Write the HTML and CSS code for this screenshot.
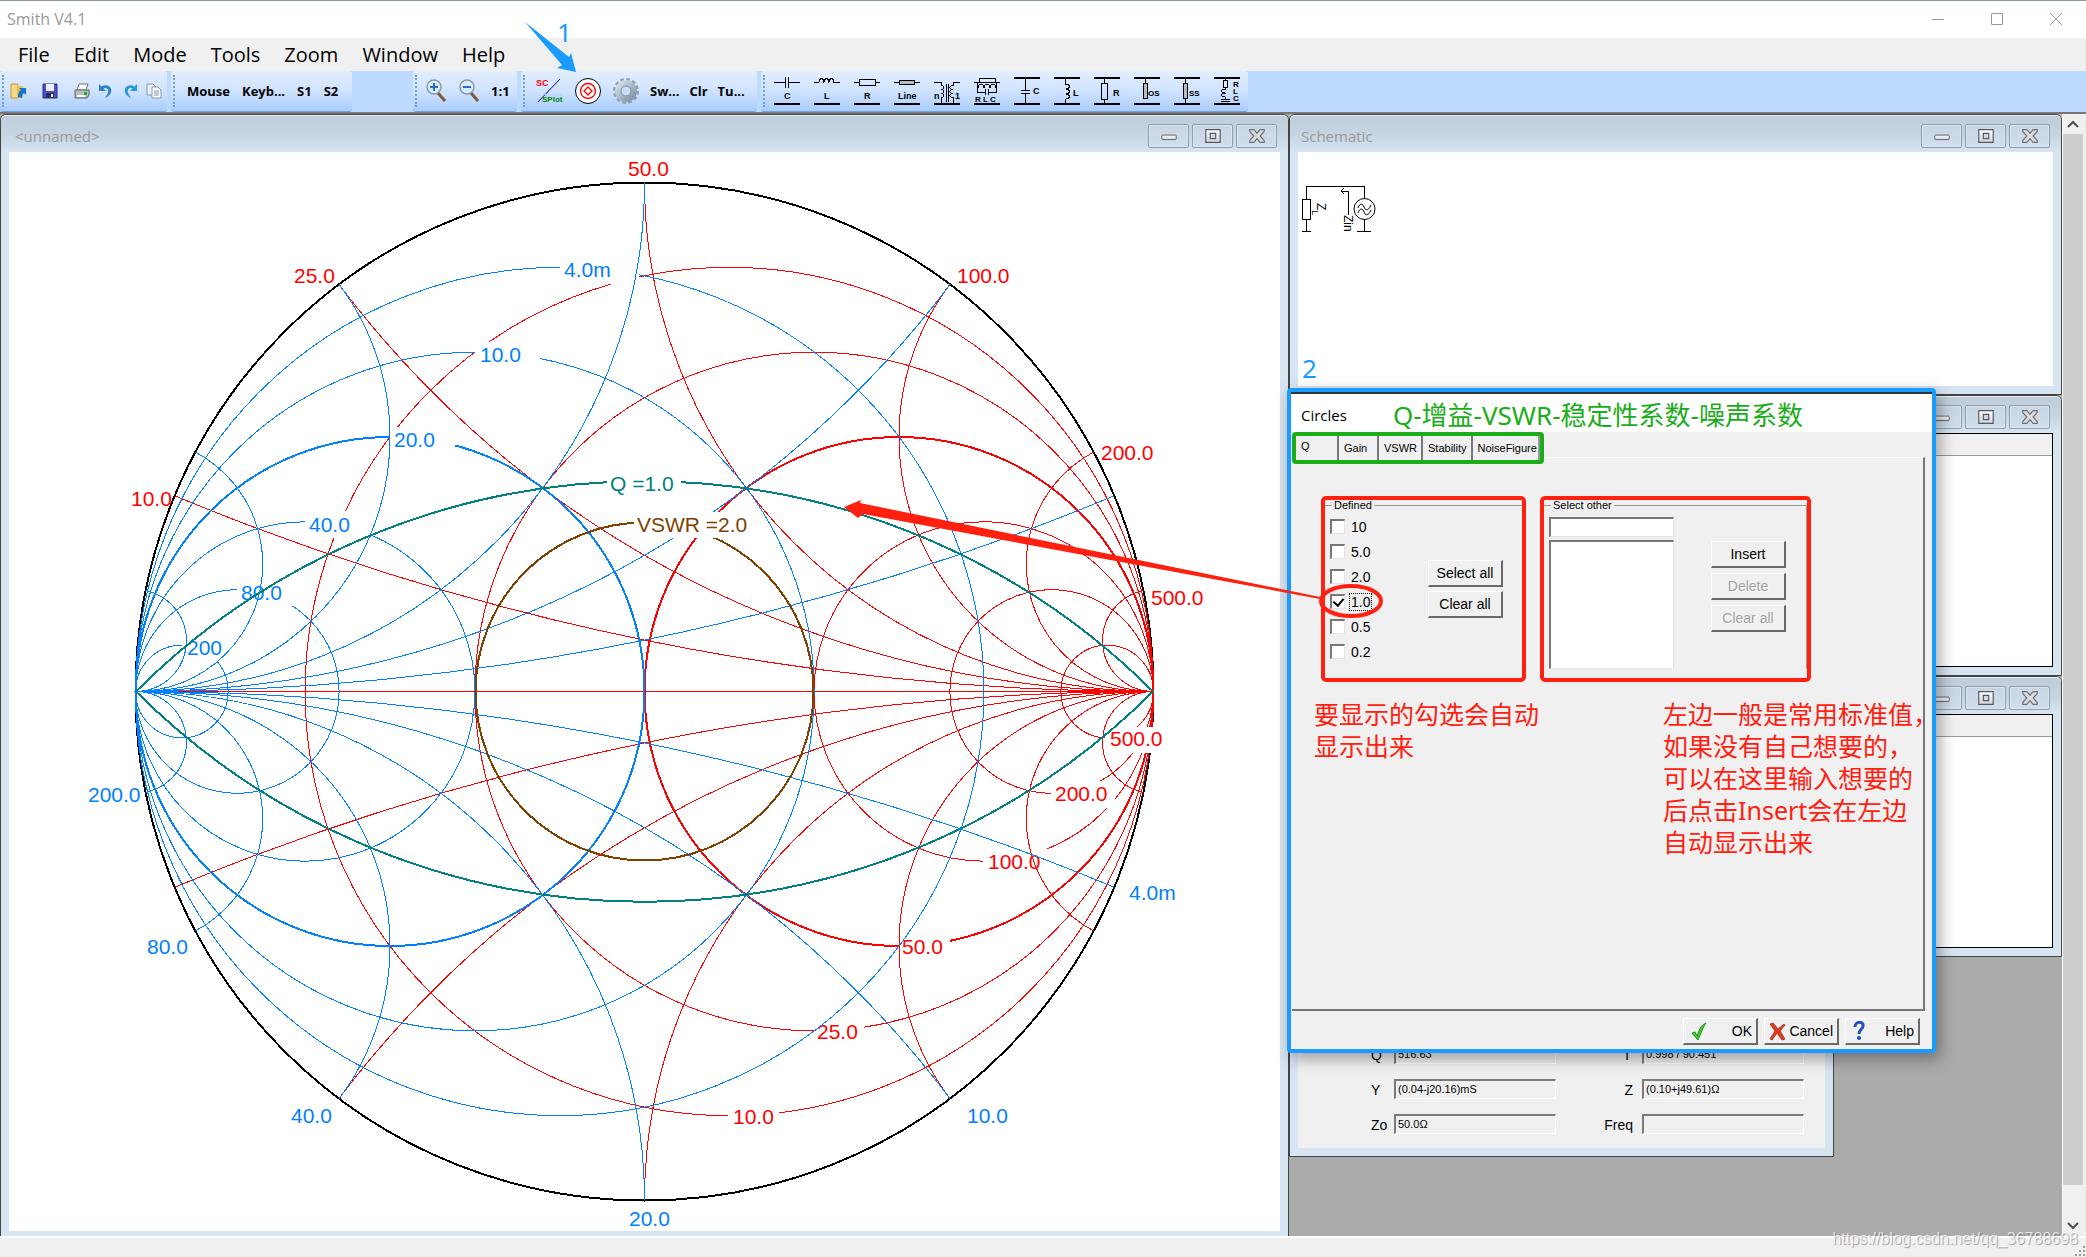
FILE: index.html
```html
<!DOCTYPE html>
<html lang="en">
<head>
    <meta charset="UTF-8">
    <meta name="viewport" content="width=device-width, initial-scale=1.0">
    <title>Smith V4.1</title>
    <link rel="stylesheet" href="styles.css">
</head>
<body>
    <svg class="defs" width="0" height="0" aria-hidden="true">
        <defs>
            <linearGradient id="metal" x1="0" y1="0" x2="0" y2="1">
                <stop offset="0" stop-color="#fff"/>
                <stop offset="1" stop-color="#d4d4d8"/>
            </linearGradient>
            <linearGradient id="gear" x1="0" y1="0" x2="1" y2="1">
                <stop offset="0" stop-color="#d3dfe8"/>
                <stop offset="1" stop-color="#7f95a6"/>
            </linearGradient>
        </defs>
        <symbol id="min" viewBox="0 0 20 20">
            <rect x="2" y="9" width="16" height="5" rx="1" fill="url(#metal)" stroke="#545866"/>
        </symbol>
        <symbol id="max" viewBox="0 0 20 20">
            <path d="M2 3h16v14H2z M7 7v6h6V7z" fill="url(#metal)" fill-rule="evenodd" stroke="#545866" stroke-width="1.3"/>
        </symbol>
        <symbol id="close" viewBox="0 0 20 20">
            <path d="M2 3h4.500l3.500 4 3.500-4H18v2l-4.500 5 4.500 5v2h-4.500L10 13l-3.500 4H2v-2l4.500-5L2 5z" fill="#dcdde0" stroke="#6c7078" stroke-width="1.300"/>
        </symbol>
    </svg>

    <div class="app">
        <header class="titlebar">
            <span class="app-name">Smith V4.1</span>
            <div class="app-controls">
                <button aria-label="Minimize"><svg width="14" height="14"><path d="M1 7.500h12" stroke="#999"/></svg></button>
                <button aria-label="Maximize"><svg width="14" height="14"><path d="M1.500 1.500h11v11h-11z" fill="none" stroke="#999"/></svg></button>
                <button aria-label="Close"><svg width="14" height="14"><path d="M1 1l12 12M13 1L1 13" stroke="#999"/></svg></button>
            </div>
        </header>

        <nav class="menubar">
            <a href="#">File</a>
            <a href="#">Edit</a>
            <a href="#">Mode</a>
            <a href="#">Tools</a>
            <a href="#">Zoom</a>
            <a href="#">Window</a>
            <a href="#">Help</a>
        </nav>

        <div class="toolbars">
            <div class="band band-file">
                <button class="wide" aria-label="Open"><svg width="16" height="16"><path d="M1 1h7v14H1z" fill="#f6d984" stroke="#c79a3a"/><path d="M8 3h5v12H8z" fill="#e8bc58"/><path d="M8 14c0-4 1-6 3-7L9 5h7v7l-2-2c-2 1-2 3-2 5z" fill="#1673c8"/></svg></button>
                <button class="wide" aria-label="Save"><svg width="16" height="16"><path d="M1 1h14v14H1z" fill="#4a4fc4" stroke="#2c2f86"/><path d="M4 1h8v7H4z" fill="#eef0fb"/><path d="M4 10h8v5H4z" fill="#2c2f66"/><path d="M9 11h2v3H9z" fill="#fff"/></svg></button>
                <button aria-label="Print"><svg width="16" height="16"><path d="M5 1h9l-2 6H3z" fill="#fff" stroke="#777"/><path d="M1 7h14v5l-2 3H1z" fill="#b9bec4" stroke="#5d6268"/><path d="M3 12h8v2H3z" fill="#fff"/><path d="M10 9h3v3h-3z" fill="#16b516"/></svg></button>
                <button aria-label="Undo"><svg width="16" height="16"><path d="M1 1v7h7L5.500 5.500C9 4 11 7 10 10l-3 5c5-2 7-6 6-9-1-4-6-5-9.500-2.500z" fill="#2b83d0"/></svg></button>
                <button aria-label="Redo"><svg width="16" height="16"><path d="M15 1v7H8l2.500-2.500C7 4 5 7 6 10l3 5C4 13 2 9 3 6c1-4 6-5 9.500-2.500z" fill="#279bd8"/></svg></button>
                <button aria-label="Copy"><svg width="16" height="16"><path d="M1 1h6l3 3v8H1z" fill="#eef3f8" stroke="#8397aa"/><path d="M6 4h6l3 3v8H6z" fill="#fff" stroke="#8397aa"/><path d="M8 8h5M8 10h5M8 12h5" stroke="#8397aa"/></svg></button>
            </div>
            <div class="band band-mouse">
                <button>Mouse</button>
                <button>Keyb...</button>
                <button>S1</button>
                <button>S2</button>
            </div>
            <div class="band band-zoom">
                <button aria-label="Zoom in"><svg width="22" height="24"><path d="M13 14l7 8" stroke="#7b5a3c" stroke-width="3"/><circle cx="9" cy="8" r="7" fill="#d9eefc" stroke="#8a98a8" stroke-width="1.500"/><path d="M5 8h8M9 4v8" stroke="#2a6fd0" stroke-width="2"/></svg></button>
                <button aria-label="Zoom out"><svg width="22" height="24"><path d="M13 14l7 8" stroke="#7b5a3c" stroke-width="3"/><circle cx="9" cy="8" r="7" fill="#d9eefc" stroke="#8a98a8" stroke-width="1.500"/><path d="M5 8h8" stroke="#2a6fd0" stroke-width="2"/></svg></button>
                <button>1:1</button>
            </div>
            <div class="band band-plot">
                <button aria-label="S plot"><svg width="28" height="28"><path d="M2 25L24 2" stroke="#00c"/><text x="0" y="9" class="tiny" fill="#f00">SC</text><path d="M9 17h17v9H9z" fill="#bcd8fd"/><text x="6" y="25" class="tiny small" fill="#080">SPlot</text></svg></button>
                <button aria-label="Circles"><svg width="28" height="28" fill="none"><circle cx="14" cy="14" r="12.500" fill="#fff" stroke="#000"/><circle cx="14" cy="14" r="7.500" stroke="#f00" stroke-width="1.300"/><path d="M14 10l4 4-4 4-4-4z" stroke="#f00" stroke-width="1.300"/></svg></button>
                <button aria-label="Settings"><svg width="28" height="28" viewBox="-14 -14 28 28"><circle r="11.500" fill="none" stroke="#8c9dab" stroke-width="3" stroke-dasharray="3.600 2.420"/><circle r="8" fill="none" stroke="url(#gear)" stroke-width="6"/><circle r="5" fill="#c6ddfb" stroke="#7e8d9a"/></svg></button>
                <button>Sw...</button>
                <button>Clr</button>
                <button>Tu...</button>
            </div>
            <div class="band band-parts">
                <button aria-label="Series capacitor"><svg class="part" width="26" height="28"><path d="M0 5.500h11M15 5.500h11M11.500 0v11M14.500 0v11"/><path class="rail" d="M0 27h26"/><text x="10" y="22" class="tiny">C</text></svg></button>
                <button aria-label="Series inductor"><svg class="part" width="26" height="28"><path d="M0 5.500h5c0-5 5-5 5 0c0-5 5-5 5 0c0-5 5-5 5 0h6"/><path class="rail" d="M0 27h26"/><text x="10" y="22" class="tiny">L</text></svg></button>
                <button aria-label="Series resistor"><svg class="part" width="26" height="28"><path d="M0 5.500h5v-3h16v6H5v-3M21 5.500h5"/><path class="rail" d="M0 27h26"/><text x="10" y="22" class="tiny">R</text></svg></button>
                <button aria-label="Series line"><svg class="part" width="26" height="28"><path d="M0 5.500h26"/><path d="M5.500 3.500h15v4h-15z" class="solid"/><path class="rail" d="M0 27h26"/><text x="4" y="22" class="tiny">Line</text></svg></button>
                <button aria-label="Transformer"><svg class="part" width="26" height="28"><path d="M0 5.500h7v3c4 0 4 4 0 4c4 0 4 4 0 4c4 0 4 4 0 4v6M26 5.500h-7v3c-4 0-4 4 0 4c-4 0-4 4 0 4c-4 0-4 4 0 4v6M12.500 7v18M14.500 7v18"/><path class="rail" d="M0 27h26"/><text x="0" y="22" class="tiny">n</text><text x="21" y="22" class="tiny">1</text></svg></button>
                <button aria-label="Parallel RLC in series"><svg class="part" width="26" height="28"><path d="M0 5.500h5v-4h16v4H5M21 5.500h5M3.500 5v10h8M22.500 5v10h-8M11.500 12v6M14.500 12v6M4 11c0-5 6-5 6 0c0-5 6-5 6 0c0-5 6-5 6 0"/><path class="rail" d="M0 27h26"/><text x="1" y="25" class="tiny small">R L C</text></svg></button>
                <button aria-label="Shunt capacitor"><svg class="part" width="26" height="28"><path d="M11.500 1v12M11.500 16v11M7 13.500h9M7 16.500h9"/><path class="rail" d="M0 1h26M0 27h26"/><text x="19" y="17" class="tiny">C</text></svg></button>
                <button aria-label="Shunt inductor"><svg class="part" width="26" height="28"><path d="M11.500 1v6c5 0 5 5 0 5c5 0 5 5 0 5c5 0 5 5 0 5v5"/><path class="rail" d="M0 1h26M0 27h26"/><text x="19" y="19" class="tiny">L</text></svg></button>
                <button aria-label="Shunt resistor"><svg class="part" width="26" height="28"><path d="M10.500 1v5h-3v16h6V6h-3M10.500 22v5"/><path class="rail" d="M0 1h26M0 27h26"/><text x="19" y="19" class="tiny">R</text></svg></button>
                <button aria-label="Open stub"><svg class="part" width="26" height="28"><path d="M11.500 1v5"/><path d="M9.500 6.500h4v15h-4z" class="solid"/><path class="rail" d="M0 1h26M0 27h26"/><text x="14" y="19" class="tiny small">OS</text></svg></button>
                <button aria-label="Shorted stub"><svg class="part" width="26" height="28"><path d="M11.500 1v26"/><path d="M9.500 6.500h4v15h-4z" class="solid"/><path class="rail" d="M0 1h26M0 27h26"/><text x="15" y="19" class="tiny small">SS</text></svg></button>
                <button aria-label="Shunt series RLC"><svg class="part" width="26" height="28"><path d="M11.500 1v2h-2v7h4V3h-2M11.500 10v2c-5 0-5 4 0 4c-5 0-5 4 0 4v2M7 22.500h9M7 24.500h9"/><path class="rail" d="M0 1h26M0 27h26"/><text x="19" y="10" class="tiny small">R</text><text x="19" y="17" class="tiny small">L</text><text x="19" y="24" class="tiny small">C</text></svg></button>
            </div>
            <!-- callout: open the circles dialog -->
            <svg class="callout-one" width="60" height="66" viewBox="523 8 60 66">
                <path d="M525 22L569 57l2-4 5 19-19-4 5-3z"/>
                <text x="557" y="42">1</text>
            </svg>
        </div>

        <main class="desktop">
            <section class="window chart-window">
                <header class="window-head">
                    <h2>&lt;unnamed&gt;</h2>
                    <div class="window-controls">
                        <button aria-label="Minimize"><svg><use href="#min"/></svg></button>
                        <button aria-label="Restore"><svg><use href="#max"/></svg></button>
                        <button aria-label="Close"><svg><use href="#close"/></svg></button>
                    </div>
                </header>
                <div class="window-body">
                    <svg class="chart" viewBox="9 152 1271 1079">
                        <defs>
                            <clipPath id="disc"><circle r="509"/></clipPath>
                        </defs>
                        <circle class="rim" cx="644.500" cy="691.500" r="509"/>

                        <!-- constant resistance -->
                        <g class="z" transform="translate(644.500 691.500)">
                            <path d="M-509 0H509"/>
                            <circle cx="84.800" r="424.200"/>
                            <circle cx="169.700" r="339.300"/>
                            <circle class="unit" cx="254.500" r="254.500"/>
                            <circle cx="339.300" r="169.700"/>
                            <circle cx="407.200" r="101.800"/>
                            <circle cx="462.700" r="46.300"/>
                        </g>
                        <g class="gap">
                            <rect x="728" y="1104" width="51" height="26"/>
                            <rect x="814" y="1019" width="50" height="26"/>
                            <rect x="899" y="934" width="51" height="26"/>
                            <rect x="983" y="849" width="64" height="26"/>
                            <rect x="1051" y="781" width="64" height="27"/>
                            <rect x="1105" y="727" width="62" height="26"/>
                        </g>
                        <g class="z-text">
                            <text x="733" y="1124">10.0</text>
                            <text x="817" y="1039">25.0</text>
                            <text x="902" y="954">50.0</text>
                            <text x="988" y="869">100.0</text>
                            <text x="1055" y="801">200.0</text>
                            <text x="1110" y="746">500.0</text>
                        </g>
                        <!-- constant reactance -->
                        <g class="z" transform="translate(644.500 691.500)" clip-path="url(#disc)">
                            <circle cx="509" cy="-2545" r="2545"/>
                            <circle cx="509" cy="2545" r="2545"/>
                            <circle cx="509" cy="-1018" r="1018"/>
                            <circle cx="509" cy="1018" r="1018"/>
                            <circle cx="509" cy="-509" r="509"/>
                            <circle cx="509" cy="509" r="509"/>
                            <circle cx="509" cy="-254.500" r="254.500"/>
                            <circle cx="509" cy="254.500" r="254.500"/>
                            <circle cx="509" cy="-127.200" r="127.200"/>
                            <circle cx="509" cy="127.200" r="127.200"/>
                            <circle cx="509" cy="-50.900" r="50.900"/>
                            <circle cx="509" cy="50.900" r="50.900"/>
                        </g>
                        <g class="z-text">
                            <text x="131" y="506">10.0</text>
                            <text x="294" y="283">25.0</text>
                            <text x="628" y="176">50.0</text>
                            <text x="957" y="283">100.0</text>
                            <text x="1101" y="460">200.0</text>
                            <text x="1151" y="605">500.0</text>
                        </g>

                        <!-- constant conductance -->
                        <g class="y" transform="translate(644.500 691.500)">
                            <circle cx="-84.800" r="424.200"/>
                            <circle cx="-169.700" r="339.300"/>
                            <circle class="unit" cx="-254.500" r="254.500"/>
                            <circle cx="-339.300" r="169.700"/>
                            <circle cx="-407.200" r="101.800"/>
                            <circle cx="-462.700" r="46.300"/>
                        </g>
                        <g class="gap">
                            <rect x="560" y="257" width="79" height="27"/>
                            <rect x="475" y="342" width="65" height="26"/>
                            <rect x="390" y="427" width="65" height="26"/>
                            <rect x="305" y="511" width="65" height="27"/>
                            <rect x="237" y="580" width="57" height="26"/>
                            <rect x="182" y="635" width="44" height="27"/>
                        </g>
                        <g class="y-text">
                            <text x="564" y="277">4.0m</text>
                            <text x="480" y="362">10.0</text>
                            <text x="394" y="447">20.0</text>
                            <text x="309" y="532">40.0</text>
                            <text x="241" y="600">80.0</text>
                            <text x="187" y="655">200</text>
                        </g>
                        <!-- constant susceptance -->
                        <g class="y" transform="translate(644.500 691.500)" clip-path="url(#disc)">
                            <circle cx="-509" cy="-2545" r="2545"/>
                            <circle cx="-509" cy="2545" r="2545"/>
                            <circle cx="-509" cy="-1018" r="1018"/>
                            <circle cx="-509" cy="1018" r="1018"/>
                            <circle cx="-509" cy="-509" r="509"/>
                            <circle cx="-509" cy="509" r="509"/>
                            <circle cx="-509" cy="-254.500" r="254.500"/>
                            <circle cx="-509" cy="254.500" r="254.500"/>
                            <circle cx="-509" cy="-127.200" r="127.200"/>
                            <circle cx="-509" cy="127.200" r="127.200"/>
                            <circle cx="-509" cy="-50.900" r="50.900"/>
                            <circle cx="-509" cy="50.900" r="50.900"/>
                        </g>
                        <g class="y-text">
                            <text x="88" y="802">200.0</text>
                            <text x="147" y="954">80.0</text>
                            <text x="291" y="1123">40.0</text>
                            <text x="629" y="1226">20.0</text>
                            <text x="967" y="1123">10.0</text>
                            <text x="1129" y="900">4.0m</text>
                        </g>

                        <circle class="vswr" cx="644.500" cy="691.500" r="169"/>
                        <path class="q" d="M136 691.500A720 720 0 0 1 1153 691.500A720 720 0 0 1 136 691.500"/>
                        <g class="gap">
                            <rect x="607" y="472" width="74" height="21"/>
                            <rect x="634" y="512" width="108" height="26"/>
                        </g>
                        <text class="q-text" x="610" y="491">Q =1.0</text>
                        <text class="vswr-text" x="637" y="532">VSWR =2.0</text>
                    </svg>
                </div>
            </section>

            <div class="side">
                <section class="window">
                    <header class="window-head">
                        <h2>Schematic</h2>
                        <div class="window-controls">
                            <button aria-label="Minimize"><svg><use href="#min"/></svg></button>
                            <button aria-label="Restore"><svg><use href="#max"/></svg></button>
                            <button aria-label="Close"><svg><use href="#close"/></svg></button>
                        </div>
                    </header>
                    <div class="window-body schematic">
                        <svg width="80" height="84" viewBox="1298 152 80 84" fill="none" stroke="#000">
                            <g shape-rendering="crispEdges">
                                <path d="M1306.500 199v-12.500h58V199M1302.500 199.500h8v20h-8zM1306.500 220v11M1302 231.500h9M1364.500 219v12M1357 231.500h14"/>
                                <path d="M1348.500 215v-24h-7M1344 188l-3 3 3 3"/>
                            </g>
                            <circle cx="1364.500" cy="209" r="10.500"/>
                            <path d="M1358 208c2-6 5-4 6-1s4 5 7-2M1358 213c2-6 5-4 6-1s4 5 7-2"/>
                            <text transform="translate(1317 203) rotate(90)">Z<tspan dy="5" font-size="9">L</tspan></text>
                            <text transform="translate(1344 215) rotate(90)">Zin</text>
                        </svg>
                        <span class="callout-two">2</span>
                    </div>
                </section>
                <section class="window">
                    <header class="window-head">
                        <div class="window-controls">
                            <button aria-label="Minimize"><svg><use href="#min"/></svg></button>
                            <button aria-label="Restore"><svg><use href="#max"/></svg></button>
                            <button aria-label="Close"><svg><use href="#close"/></svg></button>
                        </div>
                    </header>
                    <div class="window-body list"></div>
                </section>
                <section class="window">
                    <header class="window-head">
                        <div class="window-controls">
                            <button aria-label="Minimize"><svg><use href="#min"/></svg></button>
                            <button aria-label="Restore"><svg><use href="#max"/></svg></button>
                            <button aria-label="Close"><svg><use href="#close"/></svg></button>
                        </div>
                    </header>
                    <div class="window-body list"></div>
                </section>
                <section class="window cursor-window">
                    <header class="window-head"></header>
                    <form class="window-body cursor">
                        <label for="q">Q</label><input id="q" value="516.63" readonly>
                        <label for="gamma">Γ</label><input id="gamma" value="0.998 / 90.451" readonly>
                        <label for="y">Y</label><input id="y" value="(0.04-j20.16)mS" readonly>
                        <label for="z">Z</label><input id="z" value="(0.10+j49.61)Ω" readonly>
                        <label for="zo">Zo</label><input id="zo" value="50.0Ω" readonly>
                        <label for="freq">Freq</label><input id="freq" value="" readonly>
                    </form>
                </section>

                <section class="dialog">
                    <header class="dialog-head">
                        <h2>Circles</h2>
                        <span class="note-tabs">Q-增益-VSWR-稳定性系数-噪声系数</span>
                    </header>
                    <div class="tabs">
                        <button class="tab active">Q</button>
                        <button class="tab">Gain</button>
                        <button class="tab">VSWR</button>
                        <button class="tab">Stability</button>
                        <button class="tab last">NoiseFigure</button>
                    </div>
                    <div class="panel">
                        <div class="groups">
                            <div class="marked">
                                <fieldset class="defined">
                                    <legend>Defined</legend>
                                    <div class="group-row">
                                        <div class="checks">
                                            <label><input type="checkbox"><span>10</span></label>
                                            <label><input type="checkbox"><span>5.0</span></label>
                                            <label><input type="checkbox"><span>2.0</span></label>
                                            <label><input type="checkbox" checked><span class="focus">1.0</span></label>
                                            <label><input type="checkbox"><span>0.5</span></label>
                                            <label><input type="checkbox"><span>0.2</span></label>
                                        </div>
                                        <div class="defined-buttons">
                                            <button class="btn">Select all</button>
                                            <button class="btn">Clear all</button>
                                        </div>
                                    </div>
                                </fieldset>
                            </div>
                            <div class="marked">
                                <fieldset class="other">
                                    <legend>Select other</legend>
                                    <div class="group-row">
                                        <div class="values">
                                            <input type="text" aria-label="Value">
                                            <select multiple aria-label="Values"></select>
                                        </div>
                                        <div class="other-buttons">
                                            <button class="btn">Insert</button>
                                            <button class="btn" disabled>Delete</button>
                                            <button class="btn" disabled>Clear all</button>
                                        </div>
                                    </div>
                                </fieldset>
                            </div>
                        </div>
                        <div class="notes">
                            <p>要显示的勾选会自动<br>显示出来</p>
                            <p>左边一般是常用标准值，<br>如果没有自己想要的，<br>可以在这里输入想要的<br>后点击Insert会在左边<br>自动显示出来</p>
                        </div>
                    </div>
                    <footer class="dialog-foot">
                        <button class="btn icon-btn"><svg width="22" height="20"><path d="M4 12l3-1 2 4c2-6 4-11 9-13-3 4-5 10-8 17z" fill="#3fc435" stroke="#249a1e"/></svg>OK</button>
                        <button class="btn icon-btn"><svg width="18" height="20"><path d="M1 3l3-1 5 6 6-5 1 1-5 6 5 8-3 1-5-7-5 7-2-1 5-8z" fill="#e0391f" stroke="#b8402c"/></svg>Cancel</button>
                        <button class="btn icon-btn"><svg width="18" height="20" fill="none"><path d="M5 6c0-6 9-6 8-1 0 4-4 3-4 8" stroke="#1f4fc0" stroke-width="3"/><circle cx="9" cy="17" r="2" fill="#1f4fc0"/></svg>Help</button>
                    </footer>
                    <!-- links the checked value with its curve -->
                    <svg class="pointer" width="545" height="126" viewBox="841 496 545 126">
                        <path d="M844 507l17-7-1 3L1320 597v2L863 514l-5 4z" fill="#ff2010"/>
                        <ellipse cx="1351" cy="601" rx="30" ry="15" fill="none" stroke="#ff2010" stroke-width="4"/>
                    </svg>
                </section>
            </div>

            <div class="scrollbar">
                <button aria-label="Scroll up"><svg width="12" height="8"><path d="M1 7l5-5 5 5" fill="none" stroke="#505050" stroke-width="2"/></svg></button>
                <div class="thumb"></div>
                <button aria-label="Scroll down"><svg width="12" height="8"><path d="M1 1l5 5 5-5" fill="none" stroke="#505050" stroke-width="2"/></svg></button>
            </div>
        </main>

        <footer class="statusbar">
            <svg width="12" height="12" fill="#999"><path d="M9 1h2v2H9zM5 5h2v2H5zM9 5h2v2H9zM1 9h2v2H1zM5 9h2v2H5zM9 9h2v2H9z"/></svg>
        </footer>
        <span class="watermark">https://blog.csdn.net/qq_36788698</span>
    </div>
</body>
</html>
```
FILE: styles.css
```css
* {
    box-sizing: border-box;
}
body {
    margin: 0;
    color: #000;
    font-family: "Liberation Sans", Arial, sans-serif;
    font-size: 14px;
}
button, input, select {
    margin: 0;
    padding: 0;
    font: inherit;
    color: inherit;
    border: 0;
    border-radius: 0;
    background: none;
}
svg {
    display: block;
}
h2, p {
    margin: 0;
    font-weight: normal;
}
.defs {
    position: absolute;
}
.app {
    position: relative;
    display: flex;
    flex-direction: column;
    height: 100vh;
    overflow: hidden;
    background: #f0f0f0;
    border-top: 1px solid #8a979c;
}

/* title and menu */
.titlebar {
    display: flex;
    justify-content: space-between;
    align-items: center;
    height: 37px;
    padding: 0 23px 2px 7px;
    background: #fff;
    color: #999;
    font: 15px "Open Sans", "Noto Sans", sans-serif;
}
.app-name {
    font-size: 16px;
}
.app-controls {
    display: flex;
    gap: 45px;
}
.menubar {
    display: flex;
    align-items: center;
    gap: 24px;
    height: 33px;
    padding-left: 18px;
    font: 20px "Open Sans", "Noto Sans", sans-serif;
}
.menubar a {
    color: #000;
    text-decoration: none;
}

/* toolbars */
.toolbars {
    position: relative;
    display: flex;
    gap: 4px;
    height: 41px;
    background: #bedaff;
    font: bold 13px "Open Sans", "Noto Sans", sans-serif;
}
.band {
    display: flex;
    align-items: center;
    gap: 12px;
    padding-left: 16px;
    background: linear-gradient(#e3eeff, #cfe3ff 50%, #aacdfc);
    border-bottom: 1px solid #6fa3e0;
    border-radius: 3px;
    position: relative;
}
.band::before {
    content: '';
    position: absolute;
    left: 2px;
    top: 4px;
    bottom: 4px;
    border-left: 2px dotted #6d9fdd;
}
.band-file {
    width: 167px;
    gap: 8px;
    padding-left: 10px;
}
.wide {
    margin-right: 8px;
}
.band-mouse {
    width: 181px;
}
.band-zoom {
    width: 104px;
    margin-left: 57px;
    padding-left: 12px;
    gap: 11px;
}
.band-plot {
    width: 236px;
    gap: 10px;
    padding-left: 15px;
}
.band-parts {
    width: 487px;
    gap: 14px;
    padding-left: 13px;
}
.tiny {
    font: bold 9px "Liberation Sans", sans-serif;
}
.small {
    font-size: 8px;
}
.part path {
    fill: none;
    stroke: #000;
    shape-rendering: crispEdges;
}
.part .solid {
    fill: #bbb;
}
.part .rail {
    stroke-width: 2;
}
.callout-one {
    position: absolute;
    left: 523px;
    top: -63px;
    fill: #1a9cff;
    font: 26px "Noto Sans", sans-serif;
    z-index: 5;
}

/* desktop with its child windows */
.desktop {
    flex: 1;
    display: grid;
    grid-template-columns: 1fr 773px 24px;
    min-height: 0;
    background: #ababab;
    border-top: 2px solid #777;
    border-bottom: 2px solid #fff;
}
.window {
    display: flex;
    flex-direction: column;
    height: 281px;
    padding: 0 8px 8px;
    background: #d7e4f1;
    border: 1px solid #444;
    border-radius: 6px 6px 0 0;
}
.chart-window {
    height: auto;
    padding-bottom: 5px;
    border-bottom: 0;
    min-height: 0;
}
.window-head {
    display: flex;
    align-items: center;
    justify-content: space-between;
    height: 37px;
    flex: none;
    margin: 0 -8px;
    padding: 4px 11px 0 14px;
    background: linear-gradient(#c0cedb, #c6d3e0 50%, #d7e4f1);
    border-top: 1px solid #e8f0f8;
    border-radius: 5px 5px 0 0;
}
.window-head h2 {
    color: #999;
    font: 15px "Open Sans", "Noto Sans", sans-serif;
}
.side .window-head {
    padding-left: 11px;
}
.window-controls {
    display: flex;
    gap: 3px;
    margin-left: auto;
}
.window-controls button {
    display: flex;
    align-items: center;
    justify-content: center;
    width: 41px;
    height: 24px;
    border: 1px solid #8e9db2;
    border-radius: 2px;
    background: linear-gradient(#c8d5e3, #d0deec);
    box-shadow: inset 0 0 0 1px #dbe6f1;
}
.window-controls svg {
    width: 18px;
    height: 18px;
}
.window-body {
    flex: 1;
    min-height: 0;
    background: #fff;
}

/* smith chart */
.chart {
    width: 100%;
    height: 100%;
    font-size: 21px;
}
.chart circle, .chart path {
    fill: none;
    stroke-width: 1px;
    shape-rendering: crispEdges;
}
.chart clipPath circle {
    fill: #000;
}
.chart .rim {
    stroke: #000;
    stroke-width: 2px;
}
.z {
    stroke: #f00;
}
.y {
    stroke: #007fff;
}
.chart .unit {
    stroke-width: 2px;
}
.chart .q {
    stroke: #008080;
    stroke-width: 2px;
}
.chart .vswr {
    stroke: #804000;
    stroke-width: 2px;
}
.z-text {
    fill: #f00;
}
.y-text {
    fill: #007fff;
}
.q-text {
    fill: #008080;
}
.vswr-text {
    fill: #804000;
}
.gap {
    fill: #fff;
}

/* right column */
.side {
    position: relative;
}
.schematic {
    display: flex;
    flex-direction: column;
    justify-content: space-between;
}
.schematic text {
    fill: #000;
    stroke: none;
    font-size: 12px;
}
.callout-two {
    padding-left: 4px;
    color: #1a9cff;
    font: 26px/36px "Noto Sans", sans-serif;
}
.list {
    border: 1px solid #000;
    background: linear-gradient(#f0f0f0, #f0f0f0) no-repeat;
    background-size: 100% 21px;
    background-color: #fff;
}
.list::before {
    content: '';
    display: block;
    height: 21px;
    border-bottom: 1px solid #999;
}
.cursor-window {
    width: 545px;
    height: 200px;
}
.cursor {
    display: grid;
    grid-template-columns: 16px 162px 72px 162px;
    column-gap: 7px;
    grid-auto-rows: 35px;
    align-items: center;
    align-content: end;
    justify-content: start;
    padding: 0 0 7px 73px;
    background: #f0f0f0;
}
.cursor label {
    padding-top: 3px;
}
.cursor label:nth-of-type(even) {
    padding-right: 2px;
    text-align: right;
}
.cursor input {
    width: 162px;
    height: 20px;
    padding-left: 2px;
    border: 1px solid #fff;
    border-top: 2px solid #7a7a7a;
    border-left: 2px solid #7a7a7a;
    font-size: 11px;
}

/* circles dialog */
.dialog {
    position: absolute;
    left: -2px;
    top: 274px;
    display: flex;
    flex-direction: column;
    width: 649px;
    height: 665px;
    background: #f0f0f0;
    border: 4px solid #1a9cff;
    border-radius: 4px;
    box-shadow: 4px 6px 16px rgba(0, 0, 0, .35);
    z-index: 3;
}
.dialog-head {
    display: flex;
    align-items: center;
    gap: 46px;
    height: 40px;
    flex: none;
    padding: 3px 0 0 10px;
    background: #fff;
    border-top: 2px solid #333;
}
.dialog-head h2 {
    font: 15px "Open Sans", "Noto Sans", sans-serif;
}
.note-tabs {
    color: #1aad19;
    font: 26px/32px "Noto Sans", "Noto Sans CJK SC", sans-serif;
    white-space: nowrap;
}
.tabs {
    display: flex;
    align-self: flex-start;
    flex: none;
    position: relative;
    height: 32px;
    width: 252px;
    margin-left: 1px;
    background: #f0f0f0;
    border: 4px solid #1aad19;
    border-radius: 4px;
    z-index: 1;
}
.tab {
    flex: none;
    min-width: 40px;
    padding: 0 4px 0 5px;
    font-size: 11px;
    text-align: left;
    border-right: 2px solid #777;
}
.tab.active {
    width: 43px;
    padding-bottom: 4px;
}
.tab.last {
    flex: 1;
    border-color: #999;
}
.panel {
    flex: 1;
    margin: -7px 7px 0 1px;
    padding: 38px 0 0 22px;
    border-top: 1px solid #fff;
    border-right: 2px solid #777;
    border-bottom: 2px solid #777;
}
.groups {
    display: flex;
    gap: 14px;
    margin-left: 7px;
}
.marked {
    border: 4px solid #ff2010;
    border-radius: 5px;
    height: 186px;
}
fieldset {
    margin: 0;
    padding: 0 0 0 5px;
    border: 0;
    border-top: 1px solid #999;
}
.defined {
    width: 197px;
}
.other {
    width: 263px;
    border-right: 1px solid #999;
}
legend {
    margin-left: 2px;
    padding: 0 2px;
    font-size: 11px;
    line-height: 10px;
}
.group-row {
    display: flex;
}
.checks {
    width: 98px;
    padding-top: 4px;
}
.checks label {
    display: flex;
    align-items: center;
    gap: 4px;
    height: 25px;
}
.checks input {
    appearance: none;
    width: 15px;
    height: 15px;
    background: #fff;
    border: 1px solid #e3e3e3;
    border-top: 2px solid #777;
    border-left: 2px solid #777;
}
.checks input:checked::after {
    content: '';
    display: block;
    width: 5px;
    height: 8px;
    margin: 0 0 0 3px;
    border: solid #000;
    border-width: 0 2px 2px 0;
    transform: rotate(40deg);
}
.checks span {
    padding: 0 1px;
    border: 1px solid transparent;
}
.checks .focus {
    border: 1px dotted #000;
}
.btn {
    width: 75px;
    height: 27px;
    background: #f0f0f0;
    border: 1px solid #fff;
    border-right: 2px solid #696969;
    border-bottom: 2px solid #696969;
}
.btn:disabled {
    color: #a0a0a0;
    text-shadow: 1px 1px 0 #fff;
}
.defined-buttons {
    display: flex;
    flex-direction: column;
    gap: 4px;
    padding-top: 50px;
}
.values {
    display: flex;
    flex-direction: column;
    gap: 3px;
    width: 125px;
    margin-right: 37px;
    padding-top: 7px;
}
.values input, .values select {
    width: 100%;
    height: 20px;
    background: #fff;
    border: 1px solid #e3e3e3;
    border-top: 2px solid #777;
    border-left: 2px solid #777;
}
.values select {
    height: 129px;
}
.other-buttons {
    display: flex;
    flex-direction: column;
    gap: 5px;
    padding-top: 31px;
}
.notes {
    display: grid;
    grid-template-columns: 349px auto;
    margin-top: 16px;
    color: #ff2010;
    font: 25px/32px "Noto Sans", "Noto Sans CJK SC", sans-serif;
    white-space: nowrap;
}
.dialog-foot {
    display: flex;
    align-items: center;
    justify-content: flex-end;
    gap: 6px;
    height: 38px;
    flex: none;
    padding: 2px 12px 0 0;
}
.icon-btn {
    display: flex;
    align-items: center;
    justify-content: space-between;
    padding: 0 4px;
}
.pointer {
    position: absolute;
    right: 546px;
    top: 104px;
}

/* scrollbar and status */
.scrollbar {
    display: flex;
    flex-direction: column;
    padding-right: 3px;
    background: #f0f0f0;
    border-left: 1px solid #fff;
}
.scrollbar button {
    display: flex;
    align-items: center;
    justify-content: center;
    height: 20px;
}
.thumb {
    flex: 1;
    margin-bottom: 31px;
    background: #cdcdcd;
}
.statusbar {
    display: flex;
    justify-content: flex-end;
    align-items: flex-end;
    height: 19px;
}
.watermark {
    position: absolute;
    right: 8px;
    bottom: 9px;
    color: rgba(255, 255, 255, .75);
    font-size: 16px;
    text-shadow: 1px 1px 1px rgba(0, 0, 0, .35);
}
```
